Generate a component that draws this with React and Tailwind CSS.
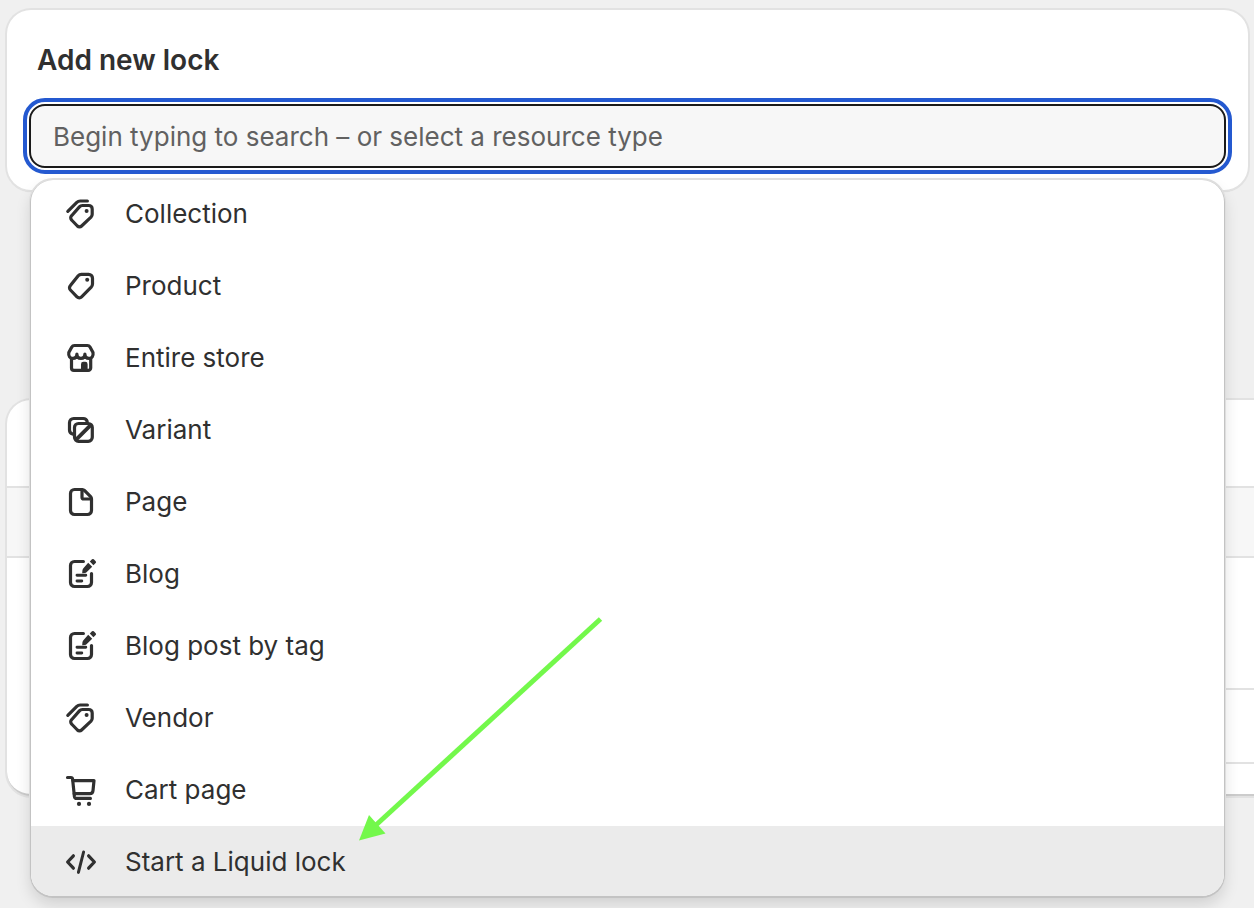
import React from "react";

function Icon({ children }) {
  return (
    <svg
      className="size-10 shrink-0"
      viewBox="0 0 40 40"
      fill="none"
      stroke="currentColor"
      strokeWidth="3.2"
      strokeLinecap="round"
      strokeLinejoin="round"
      aria-hidden="true"
    >
      {children}
    </svg>
  );
}

function CollectionIcon() {
  return (
    <Icon>
      <path d="M6.8 17.4 L15.8 8.4 A5 5 0 0 1 19.2 7 H26.4" />
      <path d="M21.4 11.5 H27.8 A3.4 3.4 0 0 1 31.2 14.9 V20.2 A4.4 4.4 0 0 1 30 23.2 L20.6 32 A3 3 0 0 1 16.4 32 L10.6 26 A3 3 0 0 1 10.6 21.7 L18.4 12.9 A4 4 0 0 1 21.4 11.5 Z" />
      <circle cx="25.6" cy="17" r="2" fill="currentColor" stroke="none" />
    </Icon>
  );
}

function ProductIcon() {
  return (
    <Icon>
      <path d="M20.4 8.3 H27.6 A3.9 3.9 0 0 1 31.5 12.2 V18 A4.8 4.8 0 0 1 30.2 21.2 L20.6 30.8 A3.2 3.2 0 0 1 16 30.8 L9.4 24 A3.2 3.2 0 0 1 9.4 19.5 L17.2 9.8 A4.4 4.4 0 0 1 20.4 8.3 Z" />
      <circle cx="26.2" cy="13.8" r="2" fill="currentColor" stroke="none" />
    </Icon>
  );
}

function StoreIcon() {
  return (
    <Icon>
      <path d="M13.4 7.5 H26.4 A3 3 0 0 1 29 9 L32 14.6 C32.6 18.2 30.8 20.4 28 20.4 C25.4 20.4 23.9 18.7 23.9 16 C23.9 18.7 22.3 20.4 19.9 20.4 C17.5 20.4 15.9 18.7 15.9 16 C15.9 18.7 14.4 20.4 11.8 20.4 C9 20.4 7.2 18.2 7.8 14.6 L10.8 9 A3 3 0 0 1 13.4 7.5 Z" />
      <path d="M10.5 20.4 V30 A2.4 2.4 0 0 0 12.9 32.4 H27.3 A2.4 2.4 0 0 0 29.7 30 V20.4" />
      <path
        d="M20 32.4 V26.2 A2.4 2.4 0 0 1 22.4 23.8 H24.2 A2.4 2.4 0 0 1 26.6 26.2 V32.4 Z"
        fill="currentColor"
        stroke="none"
      />
    </Icon>
  );
}

function VariantIcon() {
  return (
    <Icon>
      <path d="M11.5 24 A4.2 4.2 0 0 1 8.5 20 V12.7 A4.2 4.2 0 0 1 12.7 8.5 H22 A4.2 4.2 0 0 1 26.2 11.4" />
      <rect x="13.5" y="13.5" width="17.8" height="17.8" rx="4" />
      <path d="M15.6 29.2 L29.4 15.4" strokeWidth="3.8" />
    </Icon>
  );
}

function PageIcon() {
  return (
    <Icon>
      <path d="M13.5 7.5 H21.4 A3 3 0 0 1 23.4 8.4 L29.6 14.6 A3 3 0 0 1 30.5 16.7 V28.5 A4 4 0 0 1 26.5 32.5 H13.5 A4 4 0 0 1 9.5 28.5 V11.5 A4 4 0 0 1 13.5 7.5 Z" />
      <path d="M21 8.4 V15.2 A1.8 1.8 0 0 0 22.8 17 H29.8" />
    </Icon>
  );
}

function BlogIcon() {
  return (
    <Icon>
      <path d="M22.4 7.5 H13.5 A4 4 0 0 0 9.5 11.5 V28.5 A4 4 0 0 0 13.5 32.5 H26.5 A4 4 0 0 0 30.5 28.5 V19.6" />
      <path d="M16 21.3 H24.8 M16 27 H20.8" strokeWidth="2.9" />
      <path
        d="M27.2 8.8 L31.2 12.8 L25.8 18 Q25 18.8 24 19 L21.2 19.3 L21.4 16.4 Q21.6 15.2 22.4 14.2 Z"
        fill="currentColor"
        stroke="none"
      />
      <path
        d="M28.8 7.6 L31 5.3 Q31.9 4.5 32.8 5.3 L34.7 7.2 Q35.5 8.1 34.7 9 L32.4 11.2 Z"
        fill="currentColor"
        stroke="none"
      />
    </Icon>
  );
}

function CartIcon() {
  return (
    <Icon>
      <path d="M6.5 7.5 H9.8 A1.8 1.8 0 0 1 11.6 9.1 L13.4 26.4 A2.4 2.4 0 0 0 15.8 28.4 H29.4" />
      <path d="M12 10.6 H33 L32 20.6 A3.4 3.4 0 0 1 28.6 23.7 H13.2" />
      <circle cx="18" cy="33.9" r="2.1" fill="currentColor" stroke="none" />
      <circle cx="28" cy="33.9" r="2.1" fill="currentColor" stroke="none" />
    </Icon>
  );
}

function CodeIcon() {
  return (
    <Icon>
      <path d="M12.4 13.8 L6.6 20 L12.4 26.2 M27.6 13.8 L33.4 20 L27.6 26.2" />
      <path d="M22.6 10 L17.4 30.4" strokeWidth="3" />
    </Icon>
  );
}

const resources = [
  { label: "Collection", icon: CollectionIcon },
  { label: "Product", icon: ProductIcon },
  { label: "Entire store", icon: StoreIcon },
  { label: "Variant", icon: VariantIcon },
  { label: "Page", icon: PageIcon },
  { label: "Blog", icon: BlogIcon },
  { label: "Blog post by tag", icon: BlogIcon },
  { label: "Vendor", icon: CollectionIcon },
  { label: "Cart page", icon: CartIcon },
  { label: "Start a Liquid lock", icon: CodeIcon, active: true },
];

function ResourceMenu() {
  return (
    <div className="absolute inset-x-0.5 top-full z-10 mt-3">
      <div
        id="resource-types"
        role="listbox"
        aria-label="Resource types"
        className="flex flex-col overflow-hidden rounded-[22px] bg-white shadow-[0_1px_0_1px_rgba(0,0,0,0.12),0_0_0_2px_#dedede,0_8px_16px_rgba(0,0,0,0.14)]"
      >
        <div className="-my-0.5 flex flex-col">
          {resources.map(({ label, icon: Glyph, active }) => (
            <button
              key={label}
              type="button"
              role="option"
              aria-selected={Boolean(active)}
              className={
                active
                  ? "flex h-18 items-center gap-6 bg-[#ebebeb] px-[30px] text-left"
                  : "flex h-18 items-center gap-6 px-[30px] text-left"
              }
            >
              <Glyph />
              <span>{label}</span>
            </button>
          ))}
        </div>
      </div>
      <svg
        className="pointer-events-none absolute bottom-12 left-80 h-[240px] w-[260px]"
        viewBox="0 0 260 240"
        aria-hidden="true"
      >
        <path d="M249.500 11 L25 217" stroke="#73f84b" strokeWidth="5" />
        <path d="M8 232.500 L18 207 L34.500 225.500 Z" fill="#73f84b" />
      </svg>
    </div>
  );
}

export default function App() {
  return (
    <main className="min-h-screen overflow-hidden bg-[#f0f0f0] pt-2.5 pb-28 pl-[7px] font-['Inter',sans-serif] text-[26px] leading-9 text-[#303030]">
      <section className="mr-1.5 rounded-3xl bg-white px-[22px] pt-8 pb-[22px] shadow-[0_0_0_2px_#e2e2e2,0_2px_1px_rgba(0,0,0,0.12)]">
        <h2 className="px-2 text-[28px] font-semibold">
          <label htmlFor="resource-search">Add new lock</label>
        </h2>
        <div className="relative mt-[26px]">
          <input
            id="resource-search"
            type="text"
            role="combobox"
            aria-expanded="true"
            aria-controls="resource-types"
            placeholder="Begin typing to search – or select a resource type"
            className="block h-16 w-full rounded-2xl border-2 border-[#1a1a1a] bg-[#f7f7f7] px-[22px] outline-4 outline-offset-2 outline-[#2459d0] placeholder:text-[#616161] placeholder:opacity-100"
          />
          <ResourceMenu />
        </div>
      </section>

      <section className="-mr-6 mt-[210px] overflow-hidden rounded-3xl border-b-2 border-[#cccccc] bg-white shadow-[0_0_0_2px_#e2e2e2]">
        <div className="h-[88px] border-b-2 border-[#e2e2e2]" />
        <div className="h-[70px] border-b-2 border-[#e2e2e2] bg-[#f7f7f7]" />
        <div className="ml-6 h-[132px] border-b-2 border-[#e2e2e2]" />
        <div className="ml-6 h-[74px] border-b-2 border-[#e2e2e2]" />
        <div className="h-[30px]" />
      </section>
    </main>
  );
}
